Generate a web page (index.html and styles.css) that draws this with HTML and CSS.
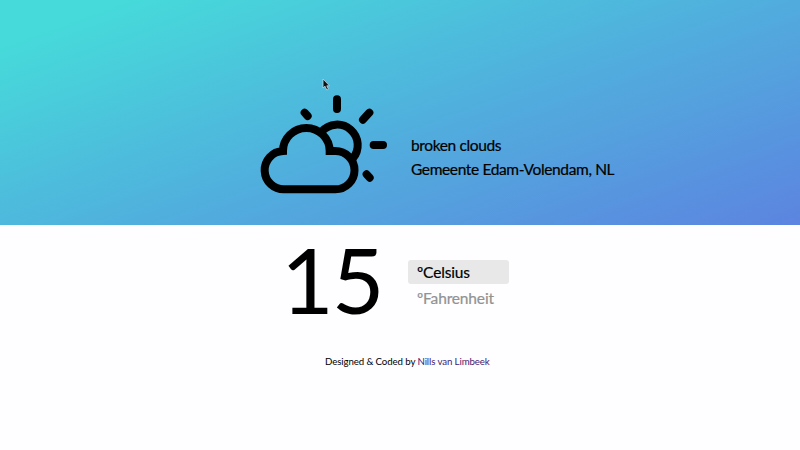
FILE: index.html
```html
<!DOCTYPE html>
<html lang="en">
<head>
<meta charset="utf-8">
<title>Weather</title>
<link rel="stylesheet" href="styles.css">
</head>
<body>
<header class="sky">
  <svg class="weather-icon" viewBox="30 70 384 303" fill="none" stroke="#000" stroke-width="24" stroke-linecap="round">
    <path stroke-linecap="butt" d="M104 356A57 57 0 0 1 99 241A70 69 0 0 1 239 241H256A57 57 0 0 1 256 356Z"/>
    <path stroke-linecap="butt" d="M215 183A61 61 0 0 1 308 264"/>
    <path d="M261 86V115M371 223H399M339 147L358 126M164 126L173 136M350 311L359 321"/>
  </svg>
  <div class="conditions">
    <div>broken clouds</div>
    <div>Gemeente Edam-Volendam, NL</div>
  </div>
  <svg class="cursor" viewBox="0 0 8 13"><path d="M1 1V10L3 8.2L4.8 12L6.4 11.2L4.8 7.8H7.5Z" fill="#111" stroke="#c8d5e3" stroke-width=".8"/></svg>
</header>
<main class="reading">
  <div class="degrees">15</div>
  <div class="units">
    <div class="unit selected">ºCelsius</div>
    <div class="unit">ºFahrenheit</div>
  </div>
</main>
<footer class="credit">Designed &amp; Coded by <a href="#">Nills van Limbeek</a></footer>
</body>
</html>
```
FILE: styles.css
```css
body {
  margin: 0;
  height: 450px;
  overflow: hidden;
  background: #fefdff;
  color: #000;
  font-family: Lato, sans-serif;
}
.sky {
  position: relative;
  box-sizing: border-box;
  height: 225px;
  padding: 94px 0 0 260px;
  display: flex;
  align-items: flex-start;
  background: linear-gradient(160deg, #46dada 9%, #50b0dd 52%, #5c84e0 100%);
}
.weather-icon {
  width: 128px;
  height: 101px;
}
.conditions {
  margin: 39px 0 0 23px;
  font-size: 15.5px;
  letter-spacing: -.37px;
  -webkit-text-stroke: .2px;
  line-height: 24px;
  white-space: nowrap;
}
.cursor {
  position: absolute;
  left: 322px;
  top: 78px;
  width: 8px;
  height: 13px;
}
.reading {
  display: flex;
  height: 120px;
  padding-left: 281px;
}
.degrees {
  width: 127px;
  font-size: 91px;
  letter-spacing: -2px;
  line-height: 108px;
}
.units {
  padding-top: 35px;
}
.unit {
  box-sizing: border-box;
  width: 101px;
  height: 24px;
  margin-bottom: 2px;
  padding-left: 9px;
  border-radius: 3px;
  font-size: 15.5px;
  letter-spacing: -.15px;
  -webkit-text-stroke: .2px;
  line-height: 24px;
  color: #929292;
}
.selected {
  background: #e8e8e8;
  color: #000;
}
.credit {
  padding: 10px 0 0 325px;
  font-size: 9.7px;
  letter-spacing: -.11px;
  line-height: 12px;
}
.credit a {
  color: #42206f;
  text-decoration: none;
}
```
